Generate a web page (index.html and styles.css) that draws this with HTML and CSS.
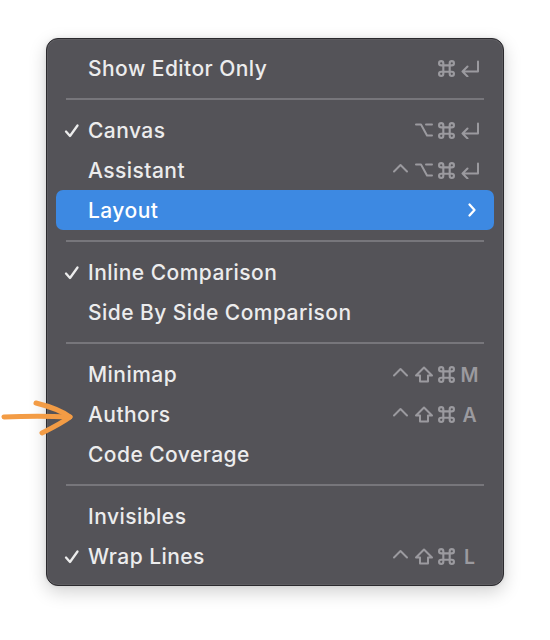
FILE: index.html
```html
<!DOCTYPE html>
<html>
<head>
<meta charset="utf-8">
<link rel="stylesheet" href="styles.css">
</head>
<body>
<div class="stage">
  <div class="menu">
    <div class="item"><span class="check"></span><span class="label">Show Editor Only</span><span class="keys">
      <span class="k"><svg class="ico" viewBox="0 0 16 16" width="17" height="17"><path d="M5 13V3a2 2 0 1 0-2 2h10a2 2 0 1 0-2-2v10a2 2 0 1 0 2-2H3a2 2 0 1 0 2 2z"/></svg></span>
      <span class="k"><svg class="ico" viewBox="0 0 20 17" width="20" height="17"><path d="M18 1.5V11.5H2.5M7.5 6.5L2.5 11.5L7.5 16.5"/></svg></span>
    </span></div>
    <div class="sep"></div>
    <div class="item"><span class="check"><svg class="tick" viewBox="0 0 16 16" width="16" height="16"><path d="M2 8.5 L6 13 L13.5 2.5"/></svg></span><span class="label">Canvas</span><span class="keys">
      <span class="k"><svg class="ico" viewBox="0 0 18 16" width="18" height="16"><path d="M1 2.5H6L12 13.5H17M11 2.5H17"/></svg></span>
      <span class="k"><svg class="ico" viewBox="0 0 16 16" width="17" height="17"><path d="M5 13V3a2 2 0 1 0-2 2h10a2 2 0 1 0-2-2v10a2 2 0 1 0 2-2H3a2 2 0 1 0 2 2z"/></svg></span>
      <span class="k"><svg class="ico" viewBox="0 0 20 17" width="20" height="17"><path d="M18 1.5V11.5H2.5M7.5 6.5L2.5 11.5L7.5 16.5"/></svg></span>
    </span></div>
    <div class="item"><span class="check"></span><span class="label">Assistant</span><span class="keys">
      <span class="k"><svg class="ico" viewBox="0 0 17 16" width="17" height="16"><path d="M2 9.5L8.5 3L15 9.5"/></svg></span>
      <span class="k"><svg class="ico" viewBox="0 0 18 16" width="18" height="16"><path d="M1 2.5H6L12 13.5H17M11 2.5H17"/></svg></span>
      <span class="k"><svg class="ico" viewBox="0 0 16 16" width="17" height="17"><path d="M5 13V3a2 2 0 1 0-2 2h10a2 2 0 1 0-2-2v10a2 2 0 1 0 2-2H3a2 2 0 1 0 2 2z"/></svg></span>
      <span class="k"><svg class="ico" viewBox="0 0 20 17" width="20" height="17"><path d="M18 1.5V11.5H2.5M7.5 6.5L2.5 11.5L7.5 16.5"/></svg></span>
    </span></div>
    <div class="item active"><span class="check"></span><span class="label">Layout</span><span class="keys"><span class="k chev"><svg viewBox="0 0 10 16" width="10" height="16"><path d="M2.5 2.5 L7.5 8 L2.5 13.5" fill="none" stroke="#ffffff" stroke-width="2.3" stroke-linecap="round" stroke-linejoin="round"/></svg></span></span></div>
    <div class="sep"></div>
    <div class="item"><span class="check"><svg class="tick" viewBox="0 0 16 16" width="16" height="16"><path d="M2 8.5 L6 13 L13.5 2.5"/></svg></span><span class="label">Inline Comparison</span></div>
    <div class="item"><span class="check"></span><span class="label">Side By Side Comparison</span></div>
    <div class="sep"></div>
    <div class="item"><span class="check"></span><span class="label">Minimap</span><span class="keys">
      <span class="k"><svg class="ico" viewBox="0 0 17 16" width="17" height="16"><path d="M2 9.5L8.5 3L15 9.5"/></svg></span>
      <span class="k"><svg class="ico" viewBox="0 0 20 17" width="20" height="17"><path d="M10 1.5L18 9.5H14V15.5H6V9.5H2Z"/></svg></span>
      <span class="k"><svg class="ico" viewBox="0 0 16 16" width="17" height="17"><path d="M5 13V3a2 2 0 1 0-2 2h10a2 2 0 1 0-2-2v10a2 2 0 1 0 2-2H3a2 2 0 1 0 2 2z"/></svg></span>
      <span class="k letter">M</span>
    </span></div>
    <div class="item"><span class="check"></span><span class="label">Authors</span><span class="keys">
      <span class="k"><svg class="ico" viewBox="0 0 17 16" width="17" height="16"><path d="M2 9.5L8.5 3L15 9.5"/></svg></span>
      <span class="k"><svg class="ico" viewBox="0 0 20 17" width="20" height="17"><path d="M10 1.5L18 9.5H14V15.5H6V9.5H2Z"/></svg></span>
      <span class="k"><svg class="ico" viewBox="0 0 16 16" width="17" height="17"><path d="M5 13V3a2 2 0 1 0-2 2h10a2 2 0 1 0-2-2v10a2 2 0 1 0 2-2H3a2 2 0 1 0 2 2z"/></svg></span>
      <span class="k letter">A</span>
    </span></div>
    <div class="item"><span class="check"></span><span class="label">Code Coverage</span></div>
    <div class="sep"></div>
    <div class="item"><span class="check"></span><span class="label">Invisibles</span></div>
    <div class="item"><span class="check"><svg class="tick" viewBox="0 0 16 16" width="16" height="16"><path d="M2 8.5 L6 13 L13.5 2.5"/></svg></span><span class="label">Wrap Lines</span><span class="keys">
      <span class="k"><svg class="ico" viewBox="0 0 17 16" width="17" height="16"><path d="M2 9.5L8.5 3L15 9.5"/></svg></span>
      <span class="k"><svg class="ico" viewBox="0 0 20 17" width="20" height="17"><path d="M10 1.5L18 9.5H14V15.5H6V9.5H2Z"/></svg></span>
      <span class="k"><svg class="ico" viewBox="0 0 16 16" width="17" height="17"><path d="M5 13V3a2 2 0 1 0-2 2h10a2 2 0 1 0-2-2v10a2 2 0 1 0 2-2H3a2 2 0 1 0 2 2z"/></svg></span>
      <span class="k letter">L</span>
    </span></div>
  </div>
  <svg class="pointer" viewBox="0 0 80 40" width="80" height="40">
    <path d="M4 19 C 25 18, 50 18, 70 19" fill="none" stroke="#f39c45" stroke-width="5" stroke-linecap="round"/>
    <path d="M36 5 C 48 8, 62 13, 70 19 C 62 25, 50 31, 42 35" fill="none" stroke="#f39c45" stroke-width="5" stroke-linecap="round" stroke-linejoin="round"/>
  </svg>
</div>
</body>
</html>
```

FILE: styles.css
```css
html, body {
  margin: 0;
  padding: 0;
  background: #ffffff;
}

.stage {
  position: relative;
  width: 550px;
  height: 640px;
  padding: 38px 0 0 46px;
  box-sizing: border-box;
}

.menu {
  width: 458px;
  box-sizing: border-box;
  background: #545358;
  border: 1px solid #2b2a2e;
  border-radius: 12px;
  padding: 9px 9px;
  box-shadow: 0 0 0 1px rgba(255,255,255,0.06) inset, 0 6px 18px rgba(0,0,0,0.18), 0 0 4px rgba(0,0,0,0.08);
  font-family: Inter, "Noto Sans", "DejaVu Sans", sans-serif;
  color: #ececed;
}

.item {
  display: flex;
  align-items: center;
  height: 40px;
  border-radius: 7px;
  padding: 0 13px 0 8px;
}

.item.active {
  background: #3d89e2;
  color: #ffffff;
}

.check {
  width: 24px;
  display: flex;
  align-items: center;
  justify-content: flex-start;
}

.tick {
  display: block;
  margin-top: 1px;
  fill: none;
  stroke: #ececec;
  stroke-width: 2.3;
  stroke-linecap: round;
  stroke-linejoin: round;
}

.label {
  font-size: 21px;
  font-weight: 500;
  letter-spacing: 0.45px;
  flex: 1;
}

.keys {
  display: flex;
  align-items: center;
  color: #9b9a9f;
}

.k {
  width: 23px;
  height: 40px;
  display: flex;
  align-items: center;
  justify-content: center;
}

.ico {
  display: block;
  fill: none;
  stroke: #9b9a9f;
  stroke-width: 2;
  stroke-linecap: round;
  stroke-linejoin: round;
}

.k.letter {
  font-family: Inter, "Noto Sans", sans-serif;
  font-size: 19.5px;
  font-weight: 600;
  padding-top: 1px;
}

.k.chev {
  justify-content: flex-end;
  padding-right: 4px;
}

.sep {
  height: 2px;
  background: #77767b;
  margin: 10px 10px;
}

.pointer {
  position: absolute;
  left: 0;
  top: 398px;
}
```
